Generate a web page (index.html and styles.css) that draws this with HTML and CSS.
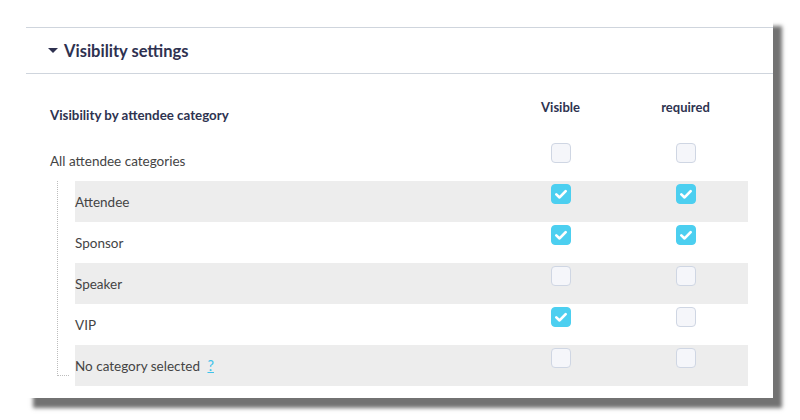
FILE: index.html
```html
<!DOCTYPE html>
<html lang="en">

<head>
    <meta charset="UTF-8">
    <meta name="viewport" content="width=device-width, initial-scale=1">
    <title>Visibility settings</title>
    <link rel="stylesheet" href="styles.css">
</head>

<body>
<div class="panel">
    <div class="panel-head">
        <span class="caret"></span>
        Visibility settings
    </div>
    <div class="panel-body">
        <div class="grid thead">
            <div class="th-label">Visibility by attendee category</div>
            <div class="th-col">Visible</div>
            <div class="th-col">required</div>
        </div>
        <div class="grid row">
            <div class="label">All attendee categories</div>
            <div class="cell"><span class="cb"></span></div>
            <div class="cell"><span class="cb"></span></div>
        </div>
        <div class="tree">
            <div class="grid row odd">
                <div class="label">Attendee</div>
                <div class="cell"><span class="cb on"><svg viewBox="0 0 20 20"><path d="M4.8 10.4l3.6 3.4L15.2 6.8"/></svg></span></div>
                <div class="cell"><span class="cb on"><svg viewBox="0 0 20 20"><path d="M4.8 10.4l3.6 3.4L15.2 6.8"/></svg></span></div>
            </div>
            <div class="grid row">
                <div class="label">Sponsor</div>
                <div class="cell"><span class="cb on"><svg viewBox="0 0 20 20"><path d="M4.8 10.4l3.6 3.4L15.2 6.8"/></svg></span></div>
                <div class="cell"><span class="cb on"><svg viewBox="0 0 20 20"><path d="M4.8 10.4l3.6 3.4L15.2 6.8"/></svg></span></div>
            </div>
            <div class="grid row odd">
                <div class="label">Speaker</div>
                <div class="cell"><span class="cb"></span></div>
                <div class="cell"><span class="cb"></span></div>
            </div>
            <div class="grid row">
                <div class="label">VIP</div>
                <div class="cell"><span class="cb on"><svg viewBox="0 0 20 20"><path d="M4.8 10.4l3.6 3.4L15.2 6.8"/></svg></span></div>
                <div class="cell"><span class="cb"></span></div>
            </div>
            <div class="grid row odd">
                <div class="label">No category selected <a class="help">?</a></div>
                <div class="cell"><span class="cb"></span></div>
                <div class="cell"><span class="cb"></span></div>
            </div>
        </div>
    </div>
</div>
</body>

</html>
```
FILE: styles.css
```css
html {
    height: 100%;
}

body {
    margin: 0;
    min-height: 100%;
    background-color: #fff;
    font-family: Lato, "Open Sans", sans-serif;
    color: #444;
}

.panel {
    width: 747px;
    margin: 18px 0 0 26px;
    padding: 9px 0 12px;
    box-sizing: border-box;
    background-color: #fff;
    box-shadow: 8px 9px 4px 1px #727272;
}

.panel-head {
    height: 45px;
    border-top: 1px solid #cfd5dd;
    border-bottom: 1px solid #cfd5dd;
    padding-left: 22px;
    display: flex;
    align-items: center;
    font-size: 16.5px;
    font-weight: bold;
    color: #2e3150;
}

.caret {
    width: 0;
    height: 0;
    border-left: 5px solid transparent;
    border-right: 5px solid transparent;
    border-top: 5px solid #2e3150;
    margin-right: 6px;
}

.panel-body {
    padding: 0 25px 0 24px;
}

.grid {
    display: grid;
    grid-template-columns: 1fr 125px 125px;
}

.thead {
    height: 66px;
    padding-top: 24px;
    box-sizing: border-box;
    font-size: 13px;
    font-weight: bold;
    color: #2e3350;
    line-height: 18px;
}

.th-label {
    padding-top: 8px;
    font-size: 13.3px;
}

.th-col {
    text-align: center;
}

.row {
    height: 41px;
    font-size: 13.5px;
    line-height: 18px;
}

.row.odd {
    background-color: #ededed;
}

.label {
    padding-top: 12px;
}

.cell {
    display: flex;
    justify-content: center;
    padding-top: 3px;
}

.tree {
    position: relative;
    padding-left: 25px;
}

.tree::before {
    content: '';
    position: absolute;
    left: 7px;
    top: 0;
    bottom: 10px;
    width: 11px;
    border-left: 1px dotted #bdbdbd;
    border-bottom: 1px dotted #bdbdbd;
}

.cb {
    width: 20px;
    height: 20px;
    box-sizing: border-box;
    border: 1px solid #cfd6e3;
    border-radius: 4px;
    background-color: #f5f6fa;
}

.cb.on {
    border-color: #4ccff0;
    background-color: #4ccff0;
}

.cb svg {
    display: block;
    width: 18px;
    height: 18px;
    fill: none;
    stroke: #fff;
    stroke-width: 3;
    stroke-linecap: round;
    stroke-linejoin: round;
}

.help {
    margin-left: 4px;
    font-size: 14.5px;
    color: #3fc2ea;
    text-decoration: underline;
    cursor: pointer;
}
```
